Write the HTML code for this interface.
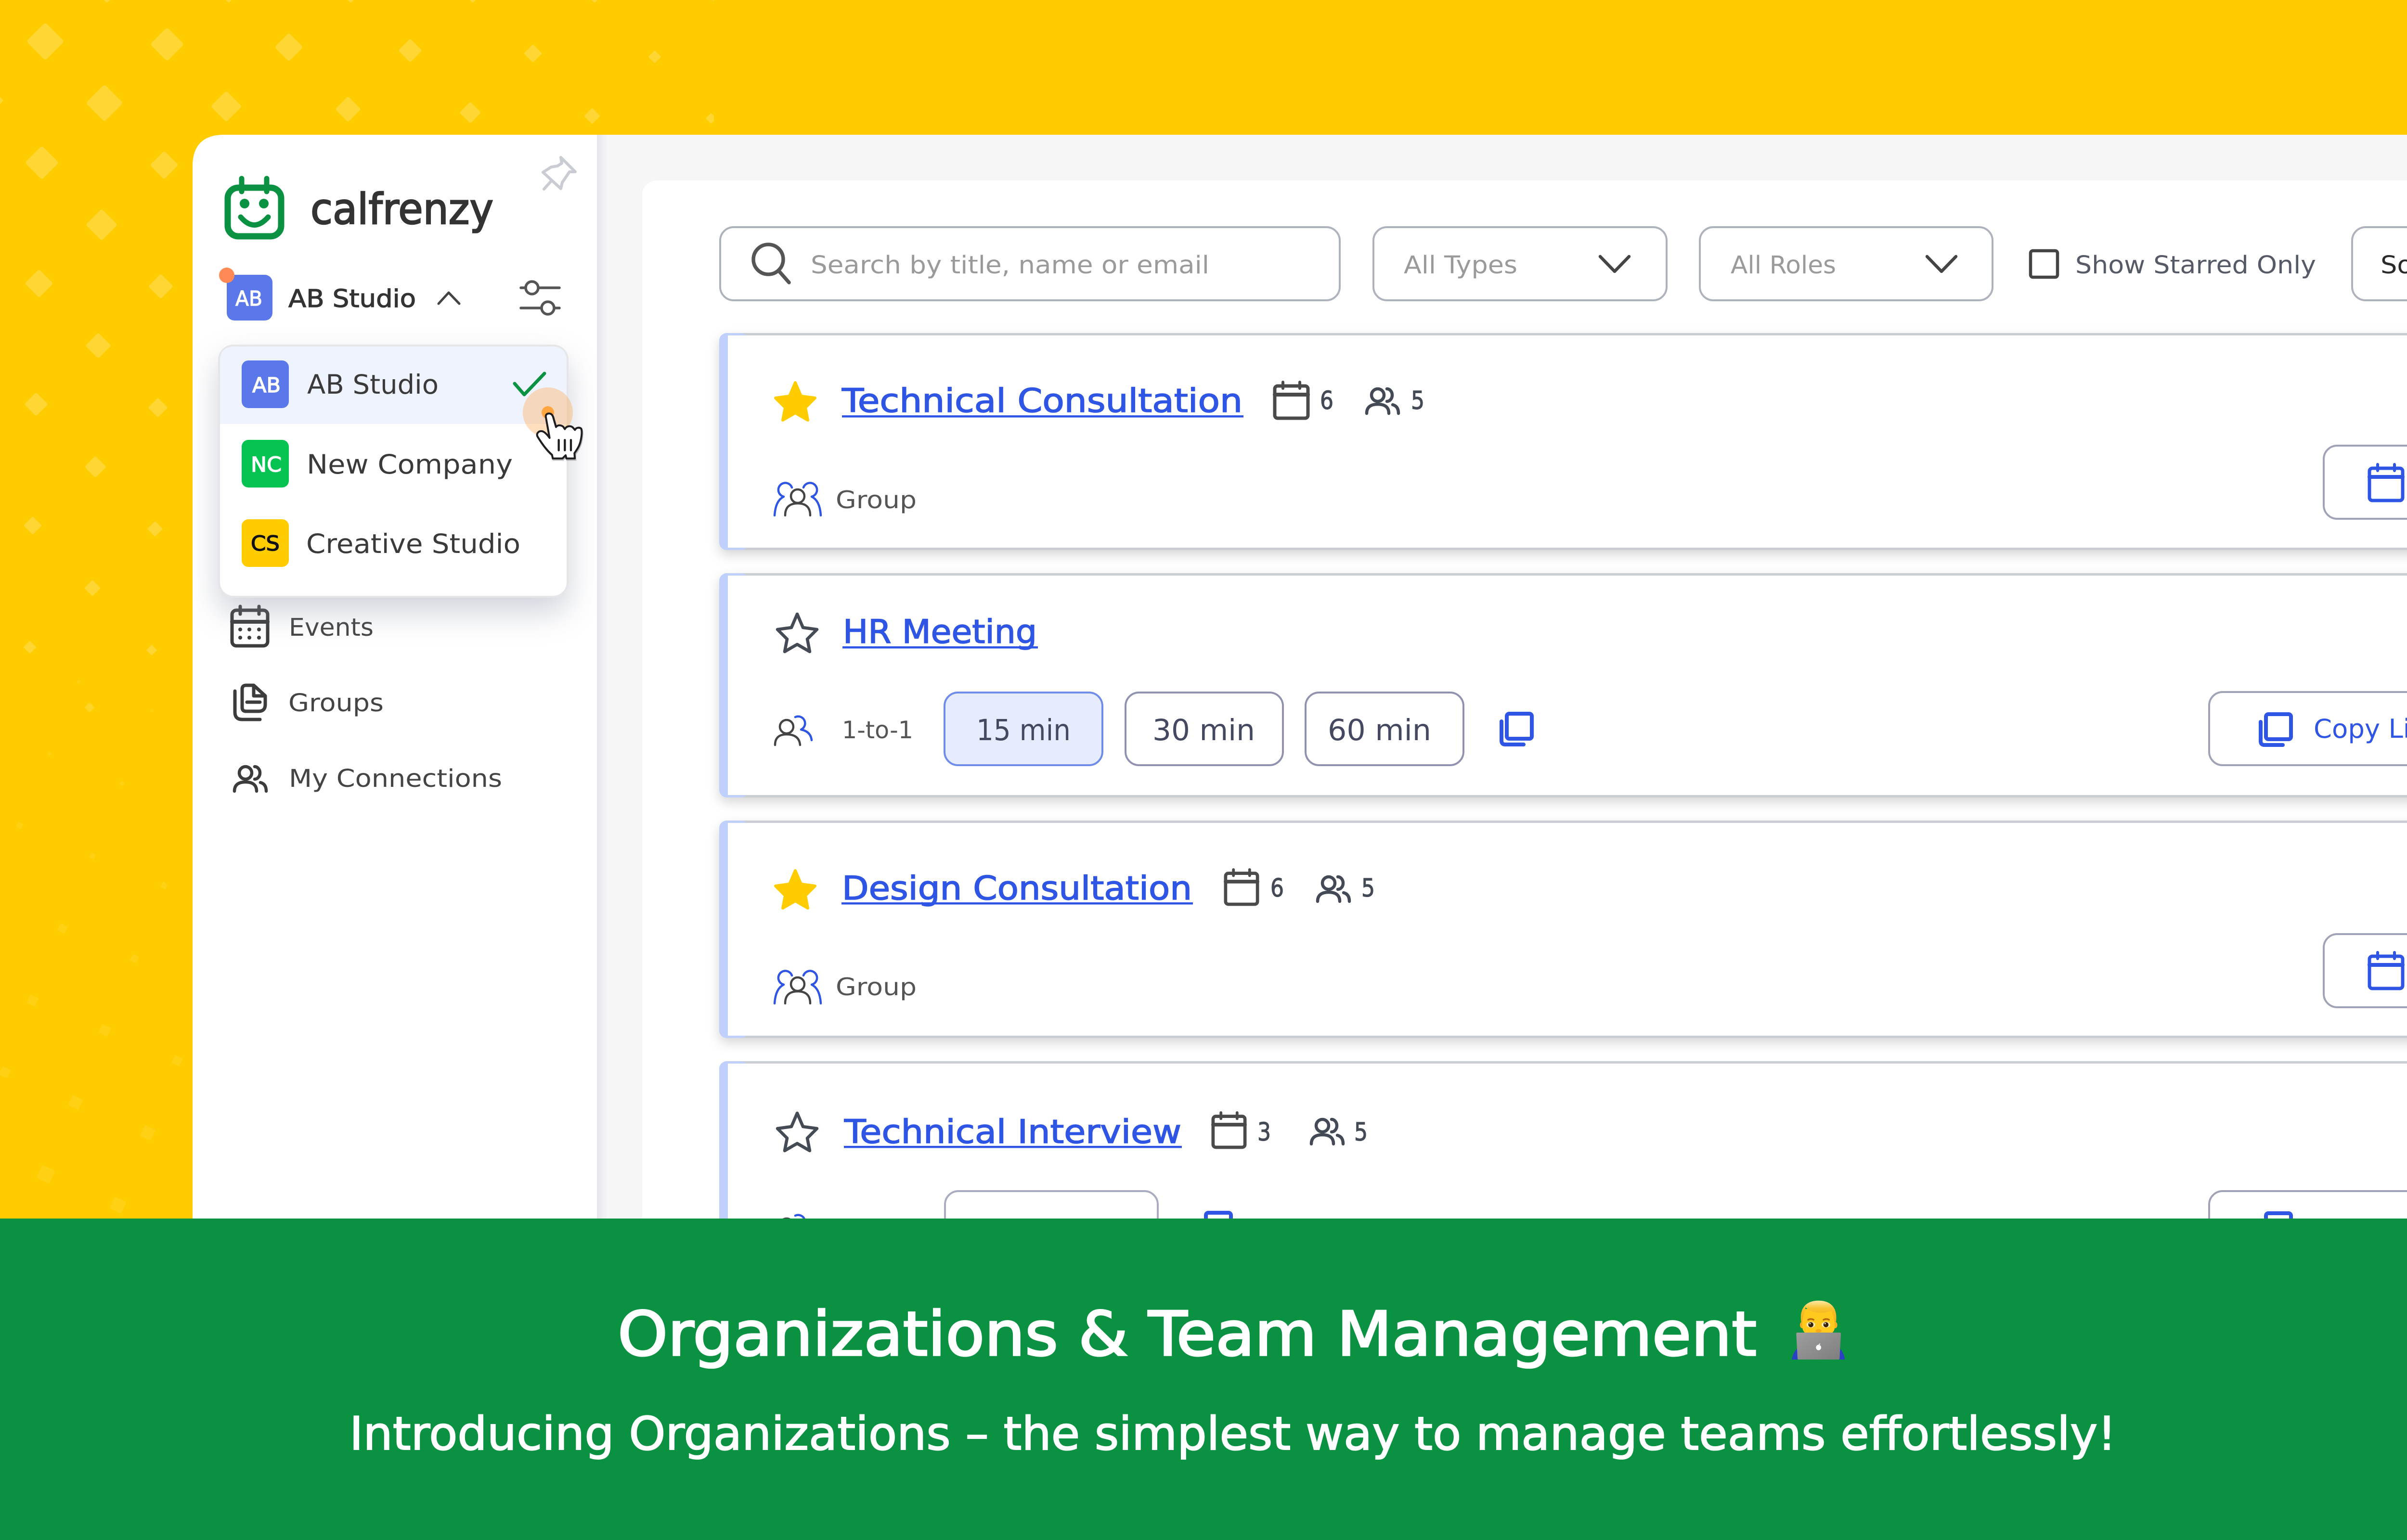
<!DOCTYPE html>
<html lang="en">
<head>
<meta charset="utf-8">
<title>Calfrenzy – Organizations &amp; Team Management</title>
<style>
html,body{margin:0;padding:0;background:#FFCC00;width:5120px;height:3200px;overflow:hidden}
svg{display:block;font-family:"DejaVu Sans","Liberation Sans",sans-serif}
.ln{fill:none;stroke-linecap:round;stroke-linejoin:round}
.box{fill:#fff;stroke:#AEB2BC;stroke-width:4}
</style>
</head>
<body>
<svg width="5120" height="3200" viewBox="0 0 5120 3200" xmlns="http://www.w3.org/2000/svg">
<defs>
  <rect id="d" x="-.5" y="-.5" width="1" height="1" rx=".1" transform="rotate(45)"/>
  <clipPath id="pat"><rect x="0" y="0" width="1483" height="2600"/></clipPath>
  <clipPath id="side"><rect x="400" y="280" width="840" height="2300"/></clipPath>
  <linearGradient id="edge" x1="0" x2="1" y1="0" y2="0"><stop offset="0" stop-color="#E4E6EA"/><stop offset="1" stop-color="#F6F6F7"/></linearGradient>
  <linearGradient id="lap" x1="0" x2="1" y1="0" y2="1"><stop offset="0" stop-color="#9E9E9E"/><stop offset="1" stop-color="#7E7E7E"/></linearGradient>
  <linearGradient id="hair" x1="0" x2="0" y1="0" y2="1"><stop offset="0" stop-color="#FFE9A6"/><stop offset=".35" stop-color="#F9C22C"/><stop offset="1" stop-color="#F0AC16"/></linearGradient>
  <filter id="blur" x="-30%" y="-30%" width="160%" height="160%"><feGaussianBlur stdDeviation="32"/></filter>
  <filter id="cs" x="-2%" y="-10%" width="104%" height="125%"><feDropShadow dx="0" dy="10" stdDeviation="12" flood-color="#000" flood-opacity=".16"/></filter>
  <g id="conn" class="ln" stroke-width="6.5">
    <circle cx="26" cy="15" r="13"/><path d="M3 53Q3 34 26 34Q49 34 49 53M45 2A11 13 0 0 1 45 28M57 35Q69 38 69 53"/>
  </g>
  <g id="cal" class="ln" stroke-width="7">
    <rect x="3" y="9" width="69" height="67" rx="6"/><path d="M3 27H72" stroke-width="8"/><path d="M20 1V14M55 1V14" stroke-width="6"/>
  </g>
  <g id="copy" class="ln" stroke-width="8" stroke="#2F55E4">
    <rect x="15" y="4" width="52" height="52" rx="5"/><path d="M4 20V60Q4 68 12 68H50"/>
  </g>
  <polygon id="star" points="45,5 57,33 86,37 66,57 71,83 45,68 19,83 24,57 4,37 33,33"/>
  <g id="grp" class="ln" stroke-width="4.5">
    <path style="stroke:#2F55E4" d="M37 9A14.5 14.5 0 1 0 20 28Q3 36 1 67M61 9A14.5 14.5 0 1 1 78 28Q95 36 97 67"/>
    <circle cx="49" cy="27" r="14" stroke="#444"/><path stroke="#444" d="M23 67Q23 42 49 42Q75 42 75 67"/>
  </g>
  <g id="one" class="ln" stroke-width="4.5">
    <path style="stroke:#2F55E4" d="M44 8A14 14 0 1 1 56 34Q76 38 78 56"/>
    <circle cx="26" cy="28" r="14" stroke="#444"/><path stroke="#444" d="M2 66Q2 44 26 44Q52 44 54 66"/>
  </g>
</defs>

<rect width="5120" height="3200" fill="#FFCC00"/>

<!-- pattern -->
<g fill="#FFD633" clip-path="url(#pat)">
  <use href="#d" transform="translate(222 -12) scale(26)"/><use href="#d" transform="translate(475 -12) scale(26)"/><use href="#d" transform="translate(729 -12) scale(26)"/><use href="#d" transform="translate(982 -12) scale(26)"/><use href="#d" transform="translate(1235 -12) scale(26)"/><use href="#d" transform="translate(1486 -12) scale(26)"/>
  <use href="#d" transform="translate(94 86) scale(56)"/><use href="#d" transform="translate(347 92) scale(50)"/><use href="#d" transform="translate(600 98) scale(42)"/><use href="#d" transform="translate(852 105) scale(35)"/><use href="#d" transform="translate(1107 111) scale(27)"/><use href="#d" transform="translate(1360 118) scale(19)"/>
  <use href="#d" transform="translate(217 214) scale(55)"/><use href="#d" transform="translate(470 221) scale(46)"/><use href="#d" transform="translate(723 227) scale(38)"/><use href="#d" transform="translate(977 234) scale(32)"/><use href="#d" transform="translate(1230 241) scale(24)"/><use href="#d" transform="translate(1477 246) scale(16)"/>
  <use href="#d" transform="translate(87 338) scale(50)"/><use href="#d" transform="translate(341 343) scale(42)"/>
  <use href="#d" transform="translate(211 467) scale(47)"/>
  <use href="#d" transform="translate(81 589) scale(42)"/><use href="#d" transform="translate(334 595) scale(37)"/>
  <use href="#d" transform="translate(204 718) scale(38)"/>
  <use href="#d" transform="translate(75 840) scale(35)"/><use href="#d" transform="translate(328 847) scale(29)"/>
  <use href="#d" transform="translate(198 970) scale(32)"/>
  <use href="#d" transform="translate(68 1092) scale(27)"/><use href="#d" transform="translate(322 1099) scale(23)"/>
  <use href="#d" transform="translate(192 1222) scale(24)"/>
  <use href="#d" transform="translate(62 1345) scale(19)"/><use href="#d" transform="translate(315 1351) scale(16)"/>
  <use href="#d" transform="translate(186 1470) scale(15)" opacity=".8"/>
  <use href="#d" transform="translate(0 209) scale(10)"/>
  <g opacity=".38">
    <use href="#d" transform="translate(163 1417) scale(6)"/><use href="#d" transform="translate(315 1477) scale(5)"/>
    <use href="#d" transform="translate(103 1566) rotate(-10) scale(7)"/><use href="#d" transform="translate(253 1628) rotate(-10) scale(9)"/>
    <use href="#d" transform="translate(41 1715) rotate(-15) scale(12)"/><use href="#d" transform="translate(192 1779) rotate(-15) scale(11)"/><use href="#d" transform="translate(341 1840) rotate(-15) scale(12)"/>
    <use href="#d" transform="translate(130 1929) rotate(-18) scale(17)"/><use href="#d" transform="translate(279 1992) rotate(-18) scale(15)"/>
    <use href="#d" transform="translate(68 2079) rotate(-20) scale(19)"/><use href="#d" transform="translate(218 2141) rotate(-20) scale(20)"/><use href="#d" transform="translate(368 2204) rotate(-20) scale(18)"/>
    <use href="#d" transform="translate(10 2228) rotate(-20) scale(19)"/>
    <use href="#d" transform="translate(157 2291) rotate(-20) scale(24)"/><use href="#d" transform="translate(307 2354) rotate(-20) scale(25)"/>
    <use href="#d" transform="translate(95 2440) rotate(-20) scale(30)"/><use href="#d" transform="translate(245 2504) rotate(-20) scale(27)"/>
  </g>
</g>

<!-- app shell -->
<path d="M400 2600V346Q400 280 466 280H5120V2600Z" fill="#F6F6F7"/>
<path d="M400 2600V346Q400 280 466 280H1240V2600Z" fill="#fff"/>
<rect x="1240" y="280" width="22" height="2320" fill="url(#edge)"/>
<rect x="1334" y="375" width="3900" height="2300" rx="30" fill="#fff"/>

<!-- logo -->
<g stroke="#0A9142" class="ln">
  <rect x="473" y="390" width="111" height="101" rx="22" stroke-width="13"/>
  <path d="M502 371V398M554 371V398" stroke-width="11"/>
  <path d="M500 451Q528 484 557 451" stroke-width="11"/>
</g>
<circle cx="508" cy="423" r="10" fill="#0A9142"/><circle cx="548" cy="423" r="10" fill="#0A9142"/>
<text x="645" y="465" font-size="88" fill="#333" stroke="#333" stroke-width="2.5" textLength="380" lengthAdjust="spacingAndGlyphs">calfrenzy</text>
<path class="ln" stroke="#C9CDD3" stroke-width="6" d="M1165 327L1195 357L1183 357L1168 379L1165 392L1128 358L1145 347L1158 345L1167 339ZM1146 375L1130 393"/>

<!-- org switcher -->
<rect x="471" y="571" width="95" height="95" rx="16" fill="#5A78E9"/>
<circle cx="471" cy="572" r="16" fill="#FF8A55"/>
<text x="489" y="635" font-size="43" fill="#fff" stroke="#fff" stroke-width="1.2" textLength="56" lengthAdjust="spacingAndGlyphs">AB</text>
<text x="599" y="638" font-size="51" fill="#333" stroke="#333" stroke-width="1.2" textLength="265" lengthAdjust="spacingAndGlyphs">AB Studio</text>
<path class="ln" stroke="#444" stroke-width="5" d="M911 631L932 608L954 631"/>
<g class="ln" stroke="#555" stroke-width="5.5">
  <path d="M1082 598H1091M1119 598H1162M1082 640H1124M1152 640H1162"/>
  <circle cx="1105" cy="598" r="13"/><circle cx="1138" cy="640" r="13"/>
</g>

<!-- nav -->
<g stroke="#3C3C3C" fill="none">
  <g class="ln" stroke-width="7">
    <rect x="482" y="1268" width="74" height="74" rx="9"/><path d="M482 1292H556" stroke-width="8"/><path d="M499 1260V1276M538 1260V1276" stroke-width="7"/>
  </g>
  <g fill="#3C3C3C" stroke="none"><circle cx="499" cy="1308" r="4"/><circle cx="518" cy="1308" r="4"/><circle cx="538" cy="1308" r="4"/><circle cx="499" cy="1325" r="4"/><circle cx="518" cy="1325" r="4"/><circle cx="538" cy="1325" r="4"/></g>
  <path class="ln" stroke-width="7" d="M503 1470V1432Q503 1424 511 1424H527L551 1446V1464Q551 1478 537 1478H511Q503 1478 503 1470ZM527 1424V1446H551M513 1459H540M488 1436V1480Q488 1495 503 1495H540"/>
</g>
<use href="#conn" transform="translate(484 1591)" stroke="#3C3C3C"/>
<text x="600" y="1321" font-size="51" fill="#444" textLength="176" lengthAdjust="spacingAndGlyphs">Events</text>
<text x="599" y="1478" font-size="51" fill="#444" textLength="198" lengthAdjust="spacingAndGlyphs">Groups</text>
<text x="600" y="1635" font-size="51" fill="#444" textLength="443" lengthAdjust="spacingAndGlyphs">My Connections</text>

<!-- dropdown -->
<g clip-path="url(#side)"><rect x="453" y="746" width="728" height="526" rx="30" fill="#8E97AA" opacity=".42" filter="url(#blur)"/></g>
<rect x="455" y="718" width="724" height="522" rx="30" fill="#fff" stroke="#E6E6E8" stroke-width="4"/>
<path d="M457 881V750Q457 720 487 720H1147Q1177 720 1177 750V881Z" fill="#EFF3FE"/>
<rect x="502" y="749" width="98" height="99" rx="14" fill="#5A78E9"/>
<rect x="502" y="914" width="98" height="99" rx="14" fill="#05C351"/>
<rect x="502" y="1079" width="98" height="99" rx="14" fill="#FFCC00"/>
<text x="524" y="815" font-size="43" fill="#fff" stroke="#fff" stroke-width="1.4" textLength="59" lengthAdjust="spacingAndGlyphs">AB</text>
<text x="521" y="980" font-size="43" fill="#fff" stroke="#fff" stroke-width="1.4" textLength="64" lengthAdjust="spacingAndGlyphs">NC</text>
<text x="521" y="1144" font-size="43" fill="#111" stroke="#111" stroke-width="1.4" textLength="60" lengthAdjust="spacingAndGlyphs">CS</text>
<text x="638" y="818" font-size="55" fill="#3A3A3A" textLength="273" lengthAdjust="spacingAndGlyphs">AB Studio</text>
<text x="637" y="984" font-size="55" fill="#3A3A3A" textLength="428" lengthAdjust="spacingAndGlyphs">New Company</text>
<text x="636" y="1149" font-size="55" fill="#3A3A3A" textLength="445" lengthAdjust="spacingAndGlyphs">Creative Studio</text>
<path class="ln" stroke="#0A9142" stroke-width="7" d="M1069 797L1089 820L1131 776"/>

<!-- cursor -->
<circle cx="1138" cy="857" r="52" fill="#FF9A33" opacity=".32"/>
<circle cx="1138" cy="857" r="13" fill="#FFA640"/>
<g transform="translate(1000 780) scale(.3333)">
  <path transform="translate(4 8)" fill="#777" opacity=".45" stroke="#777" stroke-width="12" d="M402 262C398 245 410 236 425 238C440 240 447 255 450 270L465 322C475 308 495 308 510 320L520 335C530 315 555 312 570 325L583 340C590 325 610 322 622 332C628 350 625 380 618 410C610 445 590 470 580 485L582 518L530 518L525 498L505 518L445 518L440 495C410 470 380 430 352 385C338 365 355 345 378 348C395 352 412 372 425 390Z"/>
  <path fill="#fff" stroke="#1E1E22" stroke-width="12" stroke-linejoin="round" d="M402 262C398 245 410 236 425 238C440 240 447 255 450 270L465 322C475 308 495 308 510 320L520 335C530 315 555 312 570 325L583 340C590 325 610 322 622 332C628 350 625 380 618 410C610 445 590 470 580 485L582 518L530 518L525 498L505 518L445 518L440 495C410 470 380 430 352 385C338 365 355 345 378 348C395 352 412 372 425 390Z"/>
  <path class="ln" stroke="#1E1E22" stroke-width="13" d="M482 403V467M520 403V467M558 403V467"/>
</g>

<!-- toolbar -->
<rect x="1496" y="472" width="1287" height="152" rx="28" class="box"/>
<circle cx="1596" cy="539" r="31" fill="none" stroke="#555" stroke-width="7.5"/>
<path class="ln" stroke="#555" stroke-width="7.5" d="M1617 562L1639 587"/>
<text x="1684" y="568" font-size="51" fill="#9A9A9A" textLength="828" lengthAdjust="spacingAndGlyphs">Search by title, name or email</text>
<rect x="2853" y="472" width="609" height="152" rx="28" class="box"/>
<text x="2916" y="568" font-size="51" fill="#9A9A9A" textLength="236" lengthAdjust="spacingAndGlyphs">All Types</text>
<path class="ln" stroke="#444" stroke-width="6.5" d="M3324 533L3354 564L3384 533"/>
<rect x="3531" y="472" width="608" height="152" rx="28" class="box"/>
<text x="3595" y="568" font-size="51" fill="#9A9A9A" textLength="219" lengthAdjust="spacingAndGlyphs">All Roles</text>
<path class="ln" stroke="#444" stroke-width="6.5" d="M4003 533L4033 564L4063 533"/>
<rect x="4218" y="521" width="56" height="55" rx="5" fill="#fff" stroke="#444" stroke-width="6.5"/>
<text x="4311" y="568" font-size="51" fill="#555A66" textLength="500" lengthAdjust="spacingAndGlyphs">Show Starred Only</text>
<rect x="4886" y="472" width="400" height="152" rx="28" class="box"/>
<text x="4945" y="568" font-size="51" fill="#2A2A2A" textLength="195" lengthAdjust="spacingAndGlyphs">Sort by</text>

<!-- card 1 -->
<rect x="1494" y="692" width="3760" height="451" rx="16" fill="#CACDD3" filter="url(#cs)"/>
<rect x="1494" y="692" width="60" height="451" rx="16" fill="#C0D0FD"/>
<rect x="1512" y="697" width="3700" height="441" fill="#fff"/>
<use href="#star" transform="translate(1607 790)" fill="#FFCC00" stroke="#FFCC00" stroke-width="6" stroke-linejoin="round"/>
<text x="1749" y="856" font-size="68" fill="#2F55E4" stroke="#2F55E4" stroke-width="1.6" textLength="832" lengthAdjust="spacingAndGlyphs">Technical Consultation</text>
<rect x="1749" y="863" width="834" height="4.5" fill="#2F55E4"/>
<use href="#cal" transform="translate(2645 793)" stroke="#4A4A4A"/>
<text x="2742" y="850" font-size="52" fill="#444A55" stroke="#444A55" stroke-width="1.2" textLength="28" lengthAdjust="spacingAndGlyphs">6</text>
<use href="#conn" transform="translate(2836 806)" stroke="#444A55"/>
<text x="2931" y="850" font-size="52" fill="#444A55" stroke="#444A55" stroke-width="1.2" textLength="28" lengthAdjust="spacingAndGlyphs">5</text>
<use href="#grp" transform="translate(1608 1004)"/>
<text x="1736" y="1056" font-size="50" fill="#555" textLength="168" lengthAdjust="spacingAndGlyphs">Group</text>
<rect x="4827" y="926" width="400" height="152" rx="28" fill="#fff" stroke="#A0A3B5" stroke-width="4"/>
<use href="#cal" transform="translate(4919 964)" stroke="#2F55E4"/>
<text x="5027" y="1022" font-size="54" fill="#2F55E4" textLength="270" lengthAdjust="spacingAndGlyphs">Schedule</text>

<!-- card 2 -->
<rect x="1494" y="1191" width="3760" height="466" rx="16" fill="#CACDD3" filter="url(#cs)"/>
<rect x="1494" y="1191" width="60" height="466" rx="16" fill="#C0D0FD"/>
<rect x="1512" y="1196" width="3700" height="456" fill="#fff"/>
<use href="#star" transform="translate(1611 1271)" fill="none" stroke="#444B55" stroke-width="6.5" stroke-linejoin="round"/>
<text x="1751" y="1336" font-size="68" fill="#2F55E4" stroke="#2F55E4" stroke-width="1.6" textLength="403" lengthAdjust="spacingAndGlyphs">HR Meeting</text>
<rect x="1750" y="1343" width="406" height="4.5" fill="#2F55E4"/>
<use href="#one" transform="translate(1608 1482)"/>
<text x="1749" y="1534" font-size="50" fill="#555" textLength="148" lengthAdjust="spacingAndGlyphs">1-to-1</text>
<rect x="1962" y="1439" width="328" height="151" rx="28" fill="#E6ECFE" stroke="#6E8CE8" stroke-width="4"/>
<rect x="2338" y="1439" width="327" height="151" rx="28" fill="#fff" stroke="#9092AF" stroke-width="4"/>
<rect x="2712" y="1439" width="328" height="151" rx="28" fill="#fff" stroke="#9092AF" stroke-width="4"/>
<text x="2028" y="1538" font-size="61" fill="#444860" textLength="196" lengthAdjust="spacingAndGlyphs">15 min</text>
<text x="2394" y="1538" font-size="61" fill="#444860" textLength="213" lengthAdjust="spacingAndGlyphs">30 min</text>
<text x="2758" y="1538" font-size="61" fill="#444860" textLength="215" lengthAdjust="spacingAndGlyphs">60 min</text>
<use href="#copy" transform="translate(3115 1479)"/>
<rect x="4589" y="1438" width="640" height="152" rx="28" fill="#fff" stroke="#A0A3B5" stroke-width="4"/>
<use href="#copy" transform="translate(4692 1480)"/>
<text x="4806" y="1533" font-size="54" fill="#2F55E4" textLength="267" lengthAdjust="spacingAndGlyphs">Copy Link</text>

<!-- card 3 -->
<rect x="1494" y="1705" width="3760" height="452" rx="16" fill="#CACDD3" filter="url(#cs)"/>
<rect x="1494" y="1705" width="60" height="452" rx="16" fill="#C0D0FD"/>
<rect x="1512" y="1710" width="3700" height="442" fill="#fff"/>
<use href="#star" transform="translate(1607 1804)" fill="#FFCC00" stroke="#FFCC00" stroke-width="6" stroke-linejoin="round"/>
<text x="1749" y="1869" font-size="68" fill="#2F55E4" stroke="#2F55E4" stroke-width="1.6" textLength="727" lengthAdjust="spacingAndGlyphs">Design Consultation</text>
<rect x="1748" y="1875" width="730" height="4.5" fill="#2F55E4"/>
<use href="#cal" transform="translate(2543 1806) scale(.96)" stroke="#4A4A4A"/>
<text x="2639" y="1863" font-size="52" fill="#444A55" stroke="#444A55" stroke-width="1.2" textLength="28" lengthAdjust="spacingAndGlyphs">6</text>
<use href="#conn" transform="translate(2734 1820)" stroke="#444A55"/>
<text x="2828" y="1863" font-size="52" fill="#444A55" stroke="#444A55" stroke-width="1.2" textLength="28" lengthAdjust="spacingAndGlyphs">5</text>
<use href="#grp" transform="translate(1608 2018)"/>
<text x="1736" y="2068" font-size="50" fill="#555" textLength="168" lengthAdjust="spacingAndGlyphs">Group</text>
<rect x="4827" y="1941" width="400" height="152" rx="28" fill="#fff" stroke="#A0A3B5" stroke-width="4"/>
<use href="#cal" transform="translate(4919 1978)" stroke="#2F55E4"/>
<text x="5027" y="2037" font-size="54" fill="#2F55E4" textLength="270" lengthAdjust="spacingAndGlyphs">Schedule</text>

<!-- card 4 -->
<rect x="1494" y="2205" width="3760" height="500" rx="16" fill="#CACDD3"/>
<rect x="1494" y="2205" width="60" height="500" rx="16" fill="#C0D0FD"/>
<rect x="1512" y="2210" width="3700" height="480" fill="#fff"/>
<use href="#star" transform="translate(1611 2308)" fill="none" stroke="#444B55" stroke-width="6.5" stroke-linejoin="round"/>
<text x="1754" y="2375" font-size="68" fill="#2F55E4" stroke="#2F55E4" stroke-width="1.6" textLength="700" lengthAdjust="spacingAndGlyphs">Technical Interview</text>
<rect x="1753" y="2381" width="702" height="4.5" fill="#2F55E4"/>
<use href="#cal" transform="translate(2517 2311) scale(.96)" stroke="#4A4A4A"/>
<text x="2612" y="2370" font-size="52" fill="#444A55" stroke="#444A55" stroke-width="1.2" textLength="28" lengthAdjust="spacingAndGlyphs">3</text>
<use href="#conn" transform="translate(2721 2324)" stroke="#444A55"/>
<text x="2813" y="2370" font-size="52" fill="#444A55" stroke="#444A55" stroke-width="1.2" textLength="28" lengthAdjust="spacingAndGlyphs">5</text>
<use href="#one" transform="translate(1608 2518)"/>
<rect x="1963" y="2475" width="442" height="151" rx="28" fill="#fff" stroke="#A9ABC0" stroke-width="4"/>
<use href="#copy" transform="translate(2490 2516)"/>
<rect x="4589" y="2475" width="640" height="152" rx="28" fill="#fff" stroke="#A0A3B5" stroke-width="4"/>
<use href="#copy" transform="translate(4692 2517)"/>

<!-- banner -->
<rect x="0" y="2532" width="5120" height="668" fill="#0A9142"/>
<text x="1283" y="2816" font-size="127" fill="#fff" stroke="#fff" stroke-width="3.5" textLength="2366" lengthAdjust="spacingAndGlyphs">Organizations &amp; Team Management</text>
<text x="726" y="3012" font-size="95" fill="#fff" stroke="#fff" stroke-width="2" textLength="3670" lengthAdjust="spacingAndGlyphs">Introducing Organizations – the simplest way to manage teams effortlessly!</text>

<!-- emoji: technologist -->
<g transform="translate(3600 2600) scale(.3333)">
  <path d="M366 675Q375 630 402 604H664Q690 630 697 675Z" fill="#2B3FC4"/>
  <ellipse cx="430" cy="460" rx="13" ry="20" fill="#F2B01C"/><ellipse cx="637" cy="460" rx="13" ry="20" fill="#F2B01C"/>
  <path d="M432 360H634V470Q634 530 533 530Q432 530 432 470Z" fill="#FFC91E"/>
  <path d="M425 445C412 360 450 308 533 308C616 308 654 360 641 445L628 425C626 400 618 385 612 372C560 392 490 388 452 350C446 385 432 420 432 450Z" fill="url(#hair)"/>
  <path class="ln" stroke="#B5650E" stroke-width="10" d="M468 427Q484 418 502 427M564 427Q582 418 598 427"/>
  <ellipse cx="485" cy="458" rx="26" ry="18" fill="#FFF3C8"/><ellipse cx="579" cy="458" rx="26" ry="18" fill="#FFF3C8"/>
  <circle cx="485" cy="458" r="16" fill="#3A2207"/><circle cx="579" cy="458" r="16" fill="#3A2207"/>
  <circle cx="480" cy="451" r="4" fill="#fff"/><circle cx="574" cy="451" r="4" fill="#fff"/>
  <ellipse cx="533" cy="496" rx="18" ry="11" fill="#F5A81A"/>
  <path d="M402 507H664Q672 507 672 515L664 668Q664 675 656 675H410Q402 675 402 668L394 515Q394 507 402 507Z" fill="url(#lap)"/>
  <ellipse cx="533" cy="600" rx="16" ry="17" fill="#fff"/><path d="M534 582Q535 576 544 575Q543 583 534 584Z" fill="#fff"/>
</g>
</svg>
</body>
</html>
